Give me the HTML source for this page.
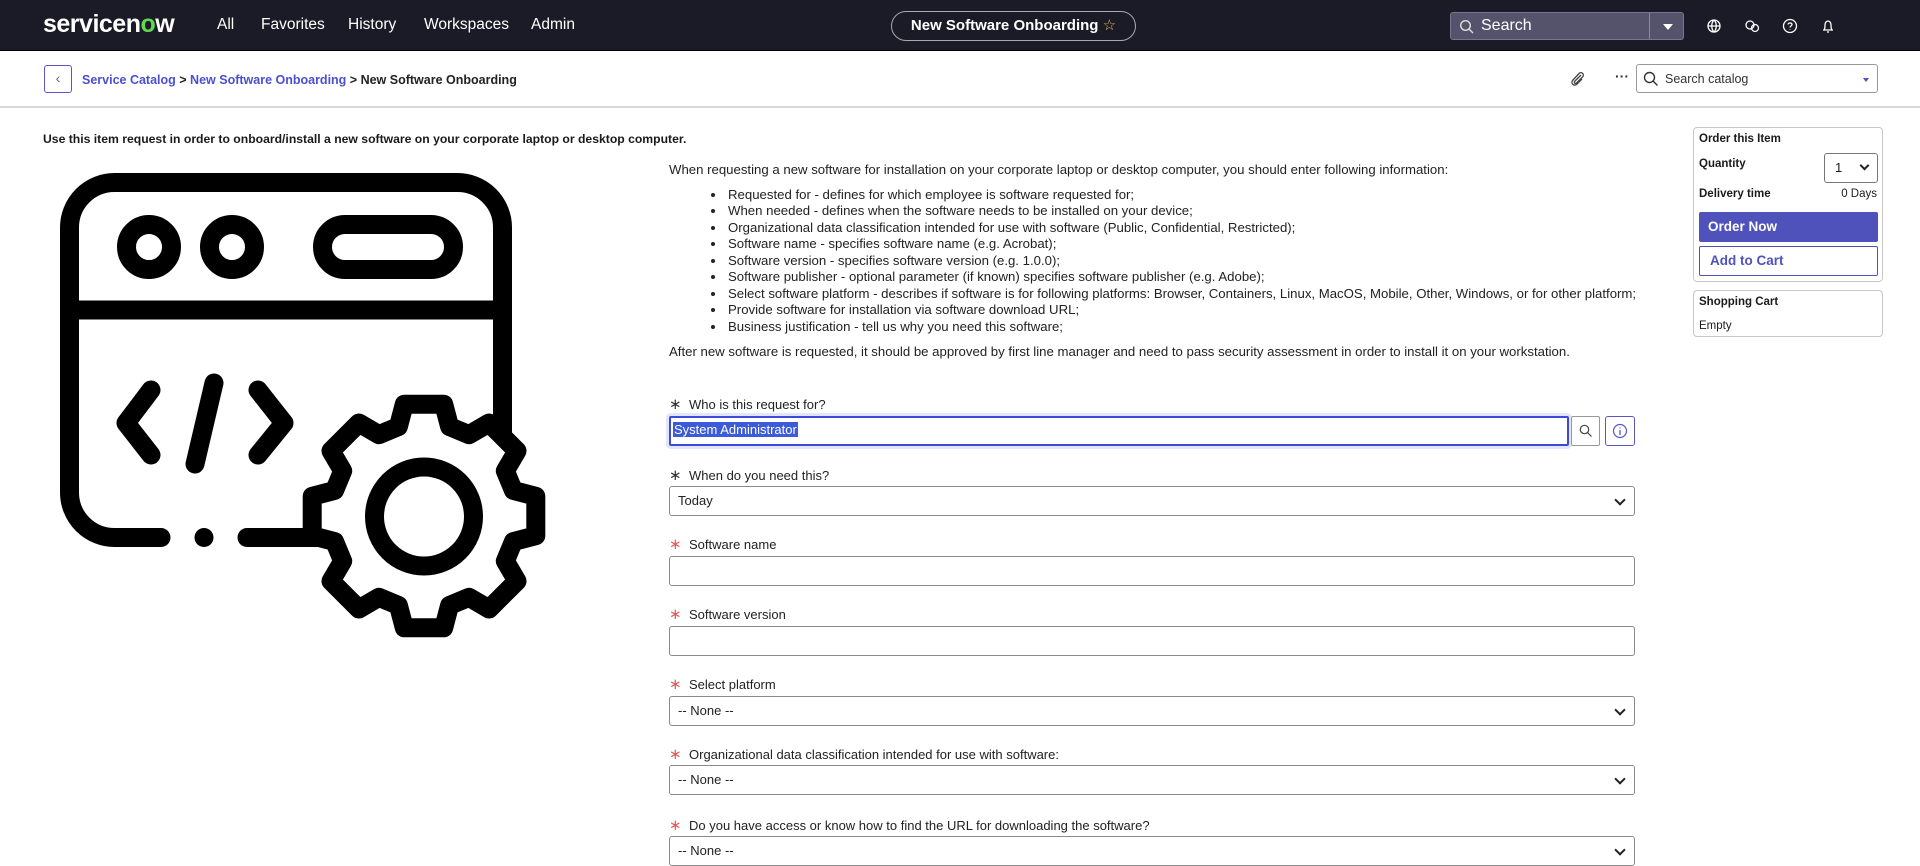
<!DOCTYPE html>
<html><head><meta charset="utf-8">
<style>
*{box-sizing:border-box;margin:0;padding:0}
body{width:1920px;height:860px;overflow:hidden;background:#fff;font-family:"Liberation Sans",Arial,sans-serif;color:#1a1a1a;position:relative}
.abs{position:absolute}
.nav{left:0;top:0;width:1920px;height:51px;background:#1b1a27;border-bottom:1px solid #000}
.nav .it{position:absolute;top:16px;color:#fff;font-size:15.5px}
.pill{left:891px;top:11px;width:245px;height:30px;border:1px solid #aaa;border-radius:15px;color:#fff;font-weight:bold;font-size:15px;text-align:center;line-height:28px}
.srch{left:1450px;top:12px;width:234px;height:28px;background:#55536b;border:1px solid #77768a;border-radius:3px;color:#fff;font-size:16px}
.crumbbar{left:0;top:52px;width:1920px;height:56px;border-bottom:2px solid #d8d8d8}
.lbl{position:absolute;left:669px;font-size:13px;color:#222}
.lbl .s{display:inline-block;width:20px;color:#333;font-size:15px}
.lbl .r{color:#e05a5a}
.fld{position:absolute;left:669px;width:966px;height:30px;border:1px solid #8a8a8a;border-radius:3px;font-size:13px;line-height:28px;padding-left:8px;color:#222}
.fld.sel::after{content:"";position:absolute;right:10px;top:9px;width:6px;height:6px;border-right:2px solid #222;border-bottom:2px solid #222;transform:rotate(45deg)}
.desc{left:669px;top:162px;font-size:13.2px;line-height:16.5px;color:#222}
.desc ul{margin:8px 0 0 57px;list-style:disc}
.desc li{padding-left:2px}
.box{border:1px solid #c8c8c8;border-radius:4px}
</style></head><body>
<div class="abs nav">
  <div class="it" style="left:43px;top:10px;font-size:25px;font-weight:bold;letter-spacing:-0.5px">servicen<span style="color:#62d84e">o</span>w</div>
  <div class="it" style="left:217px">All</div>
  <div class="it" style="left:261px">Favorites</div>
  <div class="it" style="left:348px">History</div>
  <div class="it" style="left:424px">Workspaces</div>
  <div class="it" style="left:531px">Admin</div>
</div>
<div class="abs pill">New Software Onboarding <span style="color:#e6b566;font-weight:normal">☆</span></div>
<div class="abs srch">
  <svg class="abs" style="left:8px;top:6px" width="16" height="16" viewBox="0 0 16 16"><circle cx="6.5" cy="6.5" r="4.8" fill="none" stroke="#ddd" stroke-width="1.4"/><path d="M10 10l4 4" stroke="#ddd" stroke-width="1.4"/></svg>
  <span class="abs" style="left:30px;top:4px">Search</span>
  <div class="abs" style="left:198px;top:0;width:1px;height:26px;background:#8a899c"></div>
  <div class="abs" style="left:212px;top:11px;width:0;height:0;border-left:5px solid transparent;border-right:5px solid transparent;border-top:6px solid #fff"></div>
</div>
<svg class="abs" style="left:1705px;top:17px" width="140" height="18" viewBox="0 0 140 18" fill="none" stroke="#fff" stroke-width="1.3">
  <circle cx="9" cy="9" r="6"/><path d="M3 9h12M9 3c-3 3-3 9 0 12M9 3c3 3 3 9 0 12"/>
  <circle cx="45" cy="8" r="4"/><circle cx="50" cy="11" r="3.5"/>
  <circle cx="85" cy="9" r="6.5"/><path d="M83 7.5c0-2 4-2 4 0 0 1.5-2 1.5-2 3M85 12.5v.5"/>
  <path d="M118 13h10M119 13c1-1 1-3 1-5 0-2.5 1.5-4 3-4s3 1.5 3 4c0 2 0 4 1 5M122 15h2"/>
</svg>

<div class="abs crumbbar"></div>
<div class="abs" style="left:44px;top:65px;width:28px;height:28px;border:1px solid #5b56c8;border-radius:3px;color:#5b56c8;text-align:center;line-height:25px;font-size:14px">‹</div>
<div class="abs" style="left:82px;top:73px;font-size:12.5px;font-weight:bold;color:#4b4fd1">Service Catalog <span style="color:#222">&gt;</span> New Software Onboarding <span style="color:#222">&gt; New Software Onboarding</span></div>
<svg class="abs" style="left:1570px;top:70px" width="16" height="18" viewBox="0 0 16 18"><path d="M11 5l-6 6c-1.5 1.5 0 3.5 1.5 2l6-6c2.5-2.5-1-6-3.5-3.5L3 10c-3 3 1 7 4 4l5-5" fill="none" stroke="#444" stroke-width="1.3"/></svg>
<div class="abs" style="left:1615px;top:68px;font-size:14px;font-weight:bold;color:#333">···</div>
<div class="abs box" style="left:1636px;top:64px;width:242px;height:29px;border-color:#999;border-radius:3px">
  <svg class="abs" style="left:6px;top:6px" width="16" height="16" viewBox="0 0 16 16"><circle cx="6.5" cy="6.5" r="5" fill="none" stroke="#333" stroke-width="1.4"/><path d="M10 10l4.5 4.5" stroke="#333" stroke-width="1.4"/></svg>
  <span class="abs" style="left:28px;top:7px;font-size:12.5px;color:#333">Search catalog</span>
  <div class="abs" style="left:226px;top:13px;border-left:3px solid transparent;border-right:3px solid transparent;border-top:4px solid #4b4fd1"></div>
</div>

<div class="abs" style="left:43px;top:132px;font-size:12.2px;font-weight:bold;color:#1a1a1a">Use this item request in order to onboard/install a new software on your corporate laptop or desktop computer.</div>

<svg class="abs" style="left:0;top:0" width="600" height="660" viewBox="0 0 600 660">
 <g fill="none" stroke="#000" stroke-width="19" stroke-linecap="round" stroke-linejoin="round">
  <path d="M161,537.5 H114.5 A45,45 0 0 1 69.5,492.5 V227.5 A45,45 0 0 1 114.5,182.5 H457.5 A45,45 0 0 1 502.5,227.5 V450"/>
  <path d="M247,537.5 H340"/>
  <path d="M69.5,310 H502.5" stroke-linecap="butt"/>
  <circle cx="149" cy="247" r="22.5"/>
  <circle cx="232" cy="247" r="22.5"/>
  <rect x="322.5" y="224.5" width="131" height="45" rx="22.5"/>
  <path d="M151,390 L126,423 L151,455"/>
  <path d="M214,383 L195,464"/>
  <path d="M258,390 L284,423 L258,455"/>
  <path fill="#fff" d="M398.4,426.6 L404.3,404.2 L443.7,404.2 L449.6,426.6 L469.1,434.7 L489.1,423.0 L517.0,450.9 L505.3,470.9 L513.4,490.4 L535.8,496.3 L535.8,535.7 L513.4,541.6 L505.3,561.1 L517.0,581.1 L489.1,609.0 L469.1,597.3 L449.6,605.4 L443.7,627.8 L404.3,627.8 L398.4,605.4 L378.9,597.3 L358.9,609.0 L331.0,581.1 L342.7,561.1 L334.6,541.6 L312.2,535.7 L312.2,496.3 L334.6,490.4 L342.7,470.9 L331.0,450.9 L358.9,423.0 L378.9,434.7 Z"/>
  <circle cx="424" cy="516.5" r="49.5"/>
 </g>
 <circle cx="204" cy="537.5" r="9.5" fill="#000"/>
</svg>

<div class="abs desc">
When requesting a new software for installation on your corporate laptop or desktop computer, you should enter following information:
<ul>
<li>Requested for - defines for which employee is software requested for;</li>
<li>When needed - defines when the software needs to be installed on your device;</li>
<li>Organizational data classification intended for use with software (Public, Confidential, Restricted);</li>
<li>Software name - specifies software name (e.g. Acrobat);</li>
<li>Software version - specifies software version (e.g. 1.0.0);</li>
<li>Software publisher - optional parameter (if known) specifies software publisher (e.g. Adobe);</li>
<li>Select software platform - describes if software is for following platforms: Browser, Containers, Linux, MacOS, Mobile, Other, Windows, or for other platform;</li>
<li>Provide software for installation via software download URL;</li>
<li>Business justification - tell us why you need this software;</li>
</ul>
<div style="margin-top:9px">After new software is requested, it should be approved by first line manager and need to pass security assessment in order to install it on your workstation.</div>
</div>

<div class="lbl" style="top:395px"><span class="s">∗</span>Who is this request for?</div>
<div class="abs" style="left:669px;top:416px;width:900px;height:30px;border:2px solid #3b4bd8;border-radius:2px;box-shadow:0 0 0 3px #e3e6fa"></div>
<div class="abs" style="left:673px;top:422px;font-size:13px;background:#3b5bd8;color:#fff;padding:0 1px">System Administrator</div>
<div class="abs" style="left:1571px;top:416px;width:29px;height:30px;border:1px solid #999;border-radius:2px">
 <svg class="abs" style="left:7px;top:7px" width="14" height="14" viewBox="0 0 14 14"><circle cx="5.5" cy="5.5" r="4.2" fill="none" stroke="#444" stroke-width="1.2"/><path d="M8.5 8.5l4 4" stroke="#444" stroke-width="1.2"/></svg>
</div>
<div class="abs" style="left:1605px;top:416px;width:30px;height:30px;border:1px solid #5b56c8;border-radius:3px">
 <svg class="abs" style="left:6px;top:6px" width="16" height="16" viewBox="0 0 16 16"><circle cx="8" cy="8" r="6.5" fill="none" stroke="#5b56c8" stroke-width="1.2"/><path d="M8 7v5M8 4.5v1" stroke="#5b56c8" stroke-width="1.3"/></svg>
</div>

<div class="lbl" style="top:466px"><span class="s">∗</span>When do you need this?</div>
<div class="fld sel" style="top:486px">Today</div>

<div class="lbl" style="top:535px"><span class="s r">∗</span>Software name</div>
<div class="fld" style="top:556px"></div>

<div class="lbl" style="top:605px"><span class="s r">∗</span>Software version</div>
<div class="fld" style="top:626px"></div>

<div class="lbl" style="top:675px"><span class="s r">∗</span>Select platform</div>
<div class="fld sel" style="top:696px">-- None --</div>

<div class="lbl" style="top:745px"><span class="s r">∗</span>Organizational data classification intended for use with software:</div>
<div class="fld sel" style="top:765px">-- None --</div>

<div class="lbl" style="top:816px"><span class="s r">∗</span>Do you have access or know how to find the URL for downloading the software?</div>
<div class="fld sel" style="top:836px">-- None --</div>

<div class="abs box" style="left:1693px;top:127px;width:190px;height:155px">
 <div class="abs" style="left:5px;top:5px;font-size:11.5px;font-weight:bold">Order this Item</div>
 <div class="abs" style="left:5px;top:30px;font-size:11.5px;font-weight:bold">Quantity</div>
 <div class="abs" style="left:130px;top:25px;width:54px;height:30px;border:1px solid #777;border-radius:3px;font-size:13px;line-height:28px;padding-left:10px">1<span class="abs" style="right:9px;top:8px;width:7px;height:7px;border-right:2px solid #222;border-bottom:2px solid #222;transform:rotate(45deg)"></span></div>
 <div class="abs" style="left:5px;top:60px;font-size:11.5px;font-weight:bold">Delivery time</div>
 <div class="abs" style="right:5px;top:60px;font-size:11.5px">0 Days</div>
 <div class="abs" style="left:5px;top:84px;width:179px;height:30px;background:#4f52bb;border-radius:2px;color:#fff;font-size:13.5px;font-weight:bold;line-height:30px;padding-left:9px">Order Now</div>
 <div class="abs" style="left:5px;top:118px;width:179px;height:30px;border:1px solid #4f52bb;border-radius:2px;color:#4f52bb;font-size:13.5px;font-weight:bold;line-height:28px;padding-left:10px">Add to Cart</div>
</div>
<div class="abs box" style="left:1693px;top:290px;width:190px;height:47px">
 <div class="abs" style="left:5px;top:5px;font-size:11.5px;font-weight:bold">Shopping Cart</div>
 <div class="abs" style="left:5px;top:29px;font-size:11.5px">Empty</div>
</div>
</body></html>
